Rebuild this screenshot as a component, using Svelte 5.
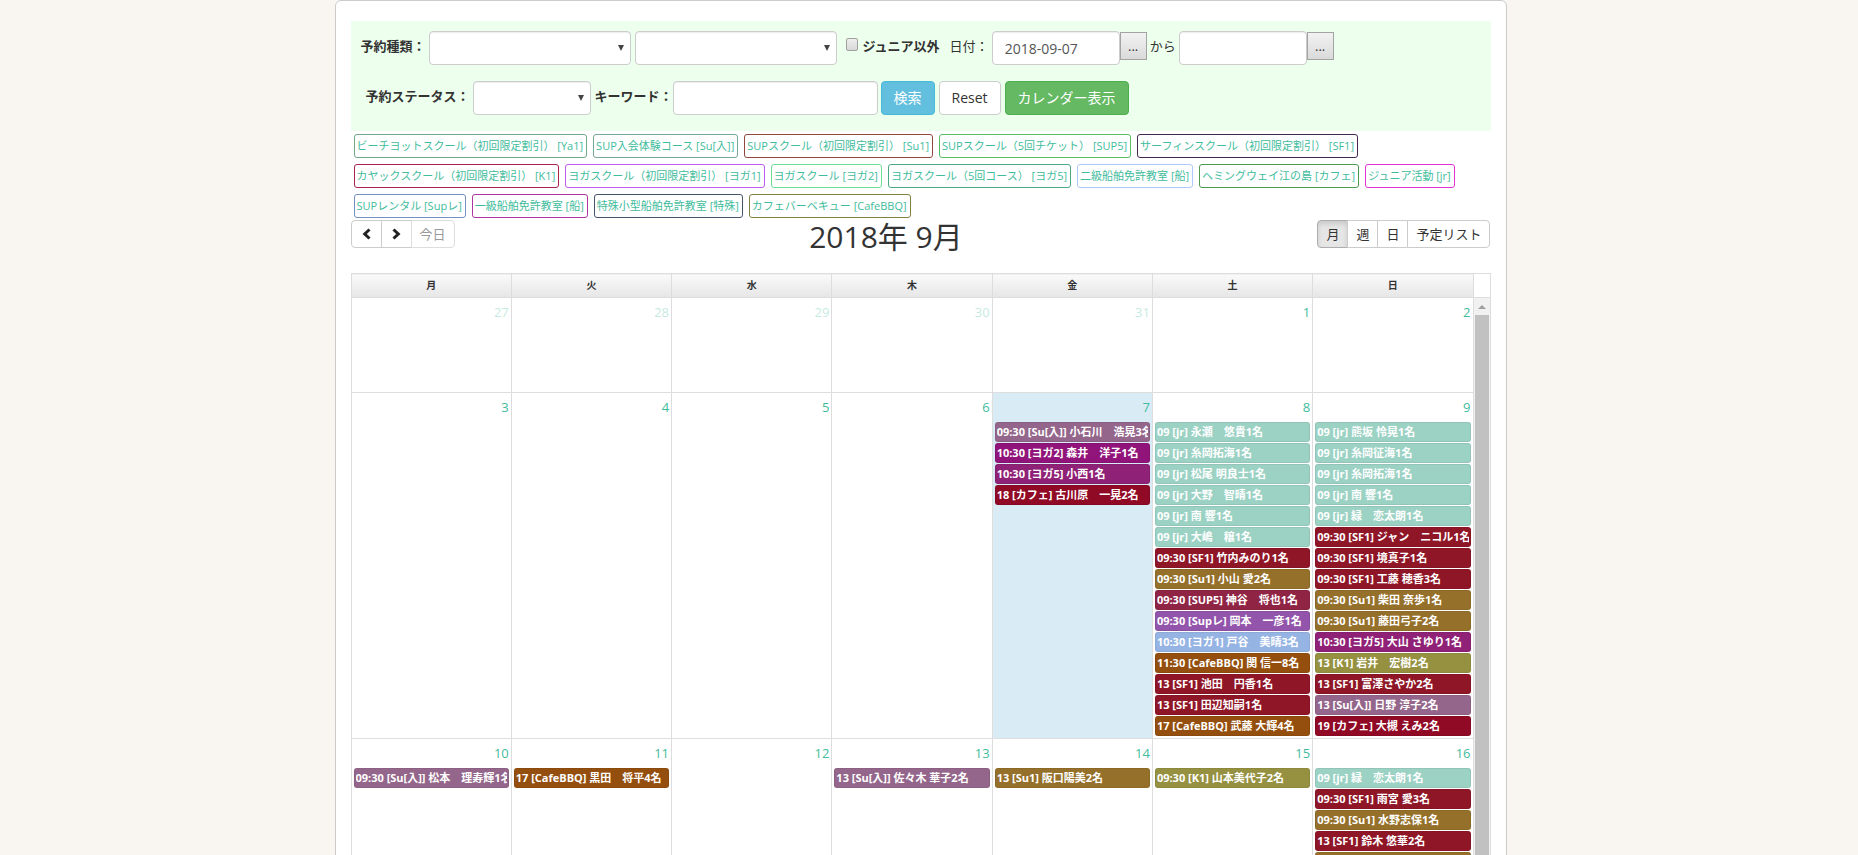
<script lang="ts">
  type CourseKey =
    | 'suIn' | 'yoga1' | 'yoga2' | 'yoga5' | 'cafe' | 'jr'
    | 'sf1' | 'su1' | 'sup5' | 'rental' | 'bbq' | 'k1';

  type Booking = { course: CourseKey; title: string };
  type Day = { date: number; other?: boolean; today?: boolean; bookings?: Booking[] };

  const colors: Record<CourseKey, string> = {
    suIn: '#94668b',
    yoga1: '#96b4e3',
    yoga2: '#901479',
    yoga5: '#8f2176',
    cafe: '#900925',
    jr: '#9cd2c4',
    sf1: '#8f1627',
    su1: '#95702a',
    sup5: '#902445',
    rental: '#9355ab',
    bbq: '#944f0e',
    k1: '#959141',
  };

  const legend = [
    { label: 'ビーチヨットスクール（初回限定割引） [Ya1]', color: '#72a887' },
    { label: 'SUP入会体験コース [Su[入]]', color: '#78a893' },
    { label: 'SUPスクール（初回限定割引） [Su1]', color: '#93463d' },
    { label: 'SUPスクール（5回チケット） [SUP5]', color: '#56bd62' },
    { label: 'サーフィンスクール（初回限定割引） [SF1]', color: '#44284f' },
    { label: 'カヤックスクール（初回限定割引） [K1]', color: '#aa234e' },
    { label: 'ヨガスクール（初回限定割引） [ヨガ1]', color: '#c25af0' },
    { label: 'ヨガスクール [ヨガ2]', color: '#6cde97' },
    { label: 'ヨガスクール（5回コース） [ヨガ5]', color: '#4ba883' },
    { label: '二級船舶免許教室 [船]', color: '#afc8fa' },
    { label: 'ヘミングウェイ江の島 [カフェ]', color: '#4b9a4d' },
    { label: 'ジュニア活動 [jr]', color: '#e332d4' },
    { label: 'SUPレンタル [Supレ]', color: '#7591c2' },
    { label: '一級船舶免許教室 [船]', color: '#ae35a3' },
    { label: '特殊小型船舶免許教室 [特殊]', color: '#46546c' },
    { label: 'カフェバーベキュー [CafeBBQ]', color: '#80803f' },
  ];

  const weekdays = ['月', '火', '水', '木', '金', '土', '日'];
  const views = ['月', '週', '日', '予定リスト'];
  let activeView = $state(0);
  let dateFrom = $state('2018-09-07');
  let dateTo = $state('');

  const weeks: Day[][] = [
    [
      { date: 27, other: true },
      { date: 28, other: true },
      { date: 29, other: true },
      { date: 30, other: true },
      { date: 31, other: true },
      { date: 1 },
      { date: 2 },
    ],
    [
      { date: 3 },
      { date: 4 },
      { date: 5 },
      { date: 6 },
      {
        date: 7,
        today: true,
        bookings: [
          { course: 'suIn', title: '09:30 [Su[入]] 小石川　浩晃3名' },
          { course: 'yoga2', title: '10:30 [ヨガ2] 森井　洋子1名' },
          { course: 'yoga5', title: '10:30 [ヨガ5] 小西1名' },
          { course: 'cafe', title: '18 [カフェ] 古川原　一晃2名' },
        ],
      },
      {
        date: 8,
        bookings: [
          { course: 'jr', title: '09 [jr] 永瀬　悠貴1名' },
          { course: 'jr', title: '09 [jr] 糸岡拓海1名' },
          { course: 'jr', title: '09 [jr] 松尾 明良士1名' },
          { course: 'jr', title: '09 [jr] 大野　智晴1名' },
          { course: 'jr', title: '09 [jr] 南 響1名' },
          { course: 'jr', title: '09 [jr] 大嶋　穣1名' },
          { course: 'sf1', title: '09:30 [SF1] 竹内みのり1名' },
          { course: 'su1', title: '09:30 [Su1] 小山 愛2名' },
          { course: 'sup5', title: '09:30 [SUP5] 神谷　将也1名' },
          { course: 'rental', title: '09:30 [Supレ] 岡本　一彦1名' },
          { course: 'yoga1', title: '10:30 [ヨガ1] 戸谷　美晴3名' },
          { course: 'bbq', title: '11:30 [CafeBBQ] 関 信一8名' },
          { course: 'sf1', title: '13 [SF1] 池田　円香1名' },
          { course: 'sf1', title: '13 [SF1] 田辺知嗣1名' },
          { course: 'bbq', title: '17 [CafeBBQ] 武藤 大輝4名' },
        ],
      },
      {
        date: 9,
        bookings: [
          { course: 'jr', title: '09 [jr] 熊坂 怜晃1名' },
          { course: 'jr', title: '09 [jr] 糸岡征海1名' },
          { course: 'jr', title: '09 [jr] 糸岡拓海1名' },
          { course: 'jr', title: '09 [jr] 南 響1名' },
          { course: 'jr', title: '09 [jr] 緑　恋太朗1名' },
          { course: 'sf1', title: '09:30 [SF1] ジャン　ニコル1名' },
          { course: 'sf1', title: '09:30 [SF1] 境真子1名' },
          { course: 'sf1', title: '09:30 [SF1] 工藤 穂香3名' },
          { course: 'su1', title: '09:30 [Su1] 柴田 奈歩1名' },
          { course: 'su1', title: '09:30 [Su1] 藤田弓子2名' },
          { course: 'yoga5', title: '10:30 [ヨガ5] 大山 さゆり1名' },
          { course: 'k1', title: '13 [K1] 岩井　宏樹2名' },
          { course: 'sf1', title: '13 [SF1] 富澤さやか2名' },
          { course: 'suIn', title: '13 [Su[入]] 日野 淳子2名' },
          { course: 'cafe', title: '19 [カフェ] 大槻 えみ2名' },
        ],
      },
    ],
    [
      { date: 10, bookings: [{ course: 'suIn', title: '09:30 [Su[入]] 松本　理寿輝1名' }] },
      { date: 11, bookings: [{ course: 'bbq', title: '17 [CafeBBQ] 黒田　将平4名' }] },
      { date: 12 },
      { date: 13, bookings: [{ course: 'suIn', title: '13 [Su[入]] 佐々木 華子2名' }] },
      { date: 14, bookings: [{ course: 'su1', title: '13 [Su1] 阪口陽美2名' }] },
      { date: 15, bookings: [{ course: 'k1', title: '09:30 [K1] 山本美代子2名' }] },
      {
        date: 16,
        bookings: [
          { course: 'jr', title: '09 [jr] 緑　恋太朗1名' },
          { course: 'sf1', title: '09:30 [SF1] 雨宮 愛3名' },
          { course: 'su1', title: '09:30 [Su1] 水野志保1名' },
          { course: 'sf1', title: '13 [SF1] 鈴木 悠華2名' },
          { course: 'su1', title: '' },
        ],
      },
    ],
  ];
</script>

<div class="page">
  <main class="panel">
    <form class="search" onsubmit={(e) => e.preventDefault()}>
      <div class="search-row">
        <label class="name" for="kind">予約種類：</label>
        <span class="select wide"><select id="kind"></select></span>
        <span class="select wide"><select aria-label="予約種類（詳細）"></select></span>
        <label class="check"><input type="checkbox" />ジュニア以外</label>
        <label class="plain" for="date-from">日付：</label>
        <input class="text date" id="date-from" type="text" bind:value={dateFrom} />
        <button class="picker" type="button">...</button>
        <label class="plain" for="date-to">から</label>
        <input class="text date" id="date-to" type="text" bind:value={dateTo} />
        <button class="picker" type="button">...</button>
      </div>
      <div class="search-row second">
        <label class="name" for="status">予約ステータス：</label>
        <span class="select narrow"><select id="status"></select></span>
        <label class="name keyword" for="keyword">キーワード：</label>
        <input class="text word" id="keyword" type="text" />
        <button class="btn info" type="submit">検索</button>
        <button class="btn" type="reset">Reset</button>
        <button class="btn success" type="button">カレンダー表示</button>
      </div>
    </form>

    <nav class="legend">
      {#each legend as item}
        <a href="#course" style="border-color: {item.color}">{item.label}</a>
      {/each}
    </nav>

    <div class="toolbar">
      <div class="group">
        <button type="button" aria-label="前へ">
          <svg width="10" height="12" viewBox="0 0 10 12"><path d="M8 1.5 3.2 6 8 10.5" /></svg>
        </button>
        <button type="button" aria-label="次へ">
          <svg width="10" height="12" viewBox="0 0 10 12"><path d="M2 1.5 6.8 6 2 10.5" /></svg>
        </button>
        <button type="button" disabled>今日</button>
      </div>
      <h2>2018年 9月</h2>
      <div class="group">
        {#each views as view, i}
          <button type="button" class:active={activeView === i} onclick={() => (activeView = i)}>{view}</button>
        {/each}
      </div>
    </div>

    <table class="calendar">
      <thead>
        <tr>
          {#each weekdays as weekday}
            <th scope="col">{weekday}</th>
          {/each}
          <td class="corner"></td>
        </tr>
      </thead>
      <tbody>
        {#each weeks as week, i}
          <tr>
            {#each week as day}
              <td class:today={day.today}>
                <a class="number" class:other={day.other} href="#day">{day.date}</a>
                {#each day.bookings ?? [] as booking}
                  <a class="booking" href="#booking" style="background: {colors[booking.course]}">
                    <span>{booking.title}</span>
                  </a>
                {/each}
              </td>
            {/each}
            {#if i === 0}
              <td class="scroll" rowspan={weeks.length}>
                <div class="arrow"></div>
                <div class="thumb"></div>
              </td>
            {/if}
          </tr>
        {/each}
      </tbody>
    </table>
  </main>
</div>

<style>
  :global(body) {
    background: #f9f5f0;
  }

  .page {
    height: 100vh;
    overflow: hidden;
    box-sizing: border-box;
    padding-right: 17px;
    font-family: 'Open Sans', 'Noto Sans CJK JP', sans-serif;
    font-size: 13px;
    color: #333;
  }

  .page * {
    box-sizing: border-box;
  }

  .panel {
    max-width: 1172px;
    margin: 0 auto;
    padding: 20px 15px;
    background: #fff;
    border: 1px solid #ccc;
    border-radius: 6px;
  }

  button,
  input,
  select {
    font-family: inherit;
    margin: 0;
  }

  a {
    color: #3fbc9c;
    text-decoration: none;
  }

  /* search form */

  .search {
    padding: 10px 10px 16px;
    background: #edffed;
  }

  .search-row {
    display: flex;
    align-items: flex-start;
    line-height: 30px;
    white-space: nowrap;
  }

  .search-row.second {
    margin-top: 16px;
    padding-left: 5px;
  }

  .name {
    margin-right: 3px;
    font-weight: 600;
  }

  .name.keyword {
    margin-right: 0;
  }

  .select {
    position: relative;
    margin-right: 4px;
  }

  .select.wide {
    width: 202px;
  }

  .select.narrow {
    width: 118px;
  }

  .select::after {
    content: '';
    position: absolute;
    right: 7px;
    top: 14px;
    border: 3px solid transparent;
    border-top: 6px solid #444;
    border-bottom: 0;
    pointer-events: none;
  }

  select,
  .text {
    display: block;
    height: 34px;
    border: 1px solid #ccc;
    border-radius: 4px;
    background: #fff;
    box-shadow: inset 0 1px 1px rgba(0, 0, 0, 0.075);
    font-size: 14px;
    color: #555;
  }

  select {
    width: 100%;
    appearance: none;
  }

  .text {
    padding: 0 12px;
  }

  .date {
    width: 128px;
  }

  .word {
    width: 205px;
    margin-right: 3px;
  }

  .check {
    display: flex;
    margin: 0 10px 0 5px;
    font-weight: 600;
  }

  .check input {
    width: 12px;
    height: 13px;
    margin: 7px 5px 0 0;
    appearance: none;
    border: 1px solid #a0a0a0;
    border-radius: 2px;
    background: linear-gradient(#eee, #d8d8d8);
  }

  .check input:checked {
    background: #555;
  }

  .plain {
    margin-right: 3px;
  }

  .picker {
    width: 27px;
    height: 28px;
    margin: 1px 3px 0 0;
    padding: 0;
    border: 1px solid #a3a3a3;
    background: linear-gradient(#f2f2f2, #dadada);
    font-size: 13px;
    line-height: 24px;
    color: #333;
  }

  .btn {
    height: 34px;
    margin-right: 4px;
    padding: 0 12px;
    border: 1px solid #ccc;
    border-radius: 4px;
    background: #fff;
    font-size: 14px;
    line-height: 32px;
    color: #333;
  }

  .btn.info {
    background: #62c0de;
    border-color: #46b8da;
    color: #fff;
  }

  .btn.success {
    background: #65b963;
    border-color: #4cae4c;
    color: #fff;
  }

  /* course legend */

  .legend {
    display: flex;
    flex-wrap: wrap;
    gap: 6px;
    padding: 3px 3px 2px;
  }

  .legend a {
    height: 24px;
    padding: 0 3px 0 2px;
    border: 1px solid;
    border-radius: 3px;
    font-size: 11px;
    line-height: 22px;
    white-space: nowrap;
  }

  /* calendar toolbar */

  .toolbar {
    display: flex;
    justify-content: space-between;
    align-items: flex-start;
    height: 53px;
  }

  h2 {
    margin: 0;
    font-size: 30px;
    font-weight: 400;
    line-height: 34px;
  }

  .group {
    display: flex;
  }

  .group button {
    height: 28px;
    margin-left: -1px;
    padding: 0 8px;
    border: 1px solid #ccc;
    background: #fff;
    font-size: 13px;
    line-height: 26px;
    color: #333;
  }

  .group button:first-child {
    margin-left: 0;
    border-radius: 4px 0 0 4px;
  }

  .group button:last-child {
    border-radius: 0 4px 4px 0;
  }

  .group button.active {
    background: #e6e6e6;
    border-color: #adadad;
    box-shadow: inset 0 3px 5px rgba(0, 0, 0, 0.125);
  }

  .group button:disabled {
    border-color: #ddd;
    color: #999;
  }

  .group svg {
    display: block;
    width: 13px;
    fill: none;
    stroke: #222;
    stroke-width: 3;
  }

  /* month grid */

  .calendar {
    width: 100%;
    table-layout: fixed;
    border-collapse: collapse;
  }

  .calendar th,
  .calendar td {
    padding: 0;
    border: 1px solid #ddd;
    vertical-align: top;
  }

  .calendar th {
    height: 24px;
    background: linear-gradient(#fafafa, #e6e6e6);
    font-size: 10px;
    font-weight: 700;
    line-height: 22px;
  }

  .calendar .corner {
    width: 17px;
  }

  .calendar tbody td {
    height: 95px;
    padding-bottom: 1px;
  }

  .calendar .today {
    background: #d9ecf6;
  }

  .number {
    display: block;
    height: 29px;
    padding-right: 2px;
    font-size: 13px;
    line-height: 28px;
    text-align: right;
  }

  .number.other {
    opacity: 0.3;
  }

  .booking {
    display: block;
    height: 20px;
    margin: 0 2px 1px;
    padding: 0 1px;
    border: 1px solid rgba(0, 0, 0, 0.06);
    border-radius: 3px;
    font-size: 11px;
    font-weight: 700;
    line-height: 18px;
    color: #fff;
  }

  .booking span {
    display: block;
    overflow: hidden;
    white-space: nowrap;
  }

  .calendar .scroll {
    position: relative;
    background: #f1f1f1;
  }

  .arrow {
    height: 17px;
    padding: 7px 4px;
  }

  .arrow::before {
    content: '';
    display: block;
    width: 0;
    border: 4px solid transparent;
    border-top: 0;
    border-bottom-color: #a0a0a0;
  }

  .thumb {
    position: absolute;
    inset: 17px 1px 0;
    background: #c1c1c1;
  }
</style>
